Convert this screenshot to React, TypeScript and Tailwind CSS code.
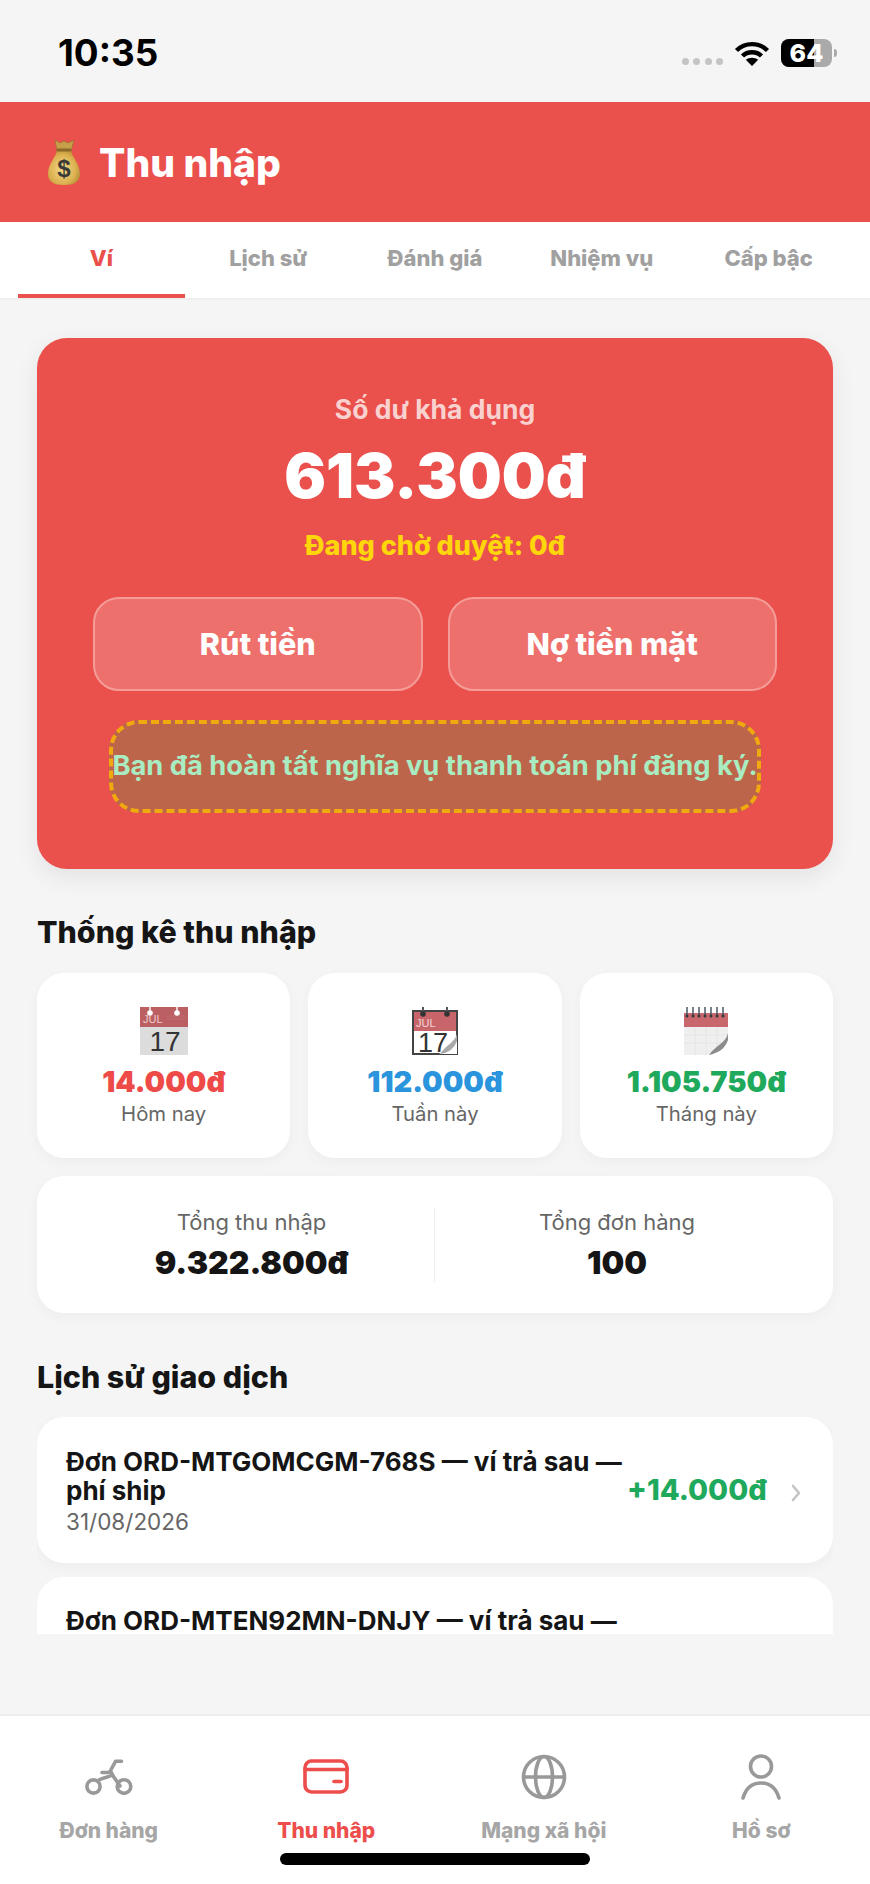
import React from "react";

function MoneyBag() {
  return (
    <svg width="34" height="48" viewBox="0 0 34 48" className="shrink-0">
      <defs>
        <radialGradient id="bag" cx="45%" cy="55%" r="65%">
          <stop offset="0%" stopColor="#f4d98a" />
          <stop offset="65%" stopColor="#dcb04e" />
          <stop offset="100%" stopColor="#a9812e" />
        </radialGradient>
      </defs>
      <path d="M8 2 L13 5 L17 3 L21 5 L27 2 L24 13 L10 13 Z" fill="#c79f4b" stroke="#8f6f2c" strokeWidth="0.6" />
      <path d="M10 12 C10 18 1 25 1 36 C1 44 7 47 17 47 C27 47 33 44 33 36 C33 25 24 18 24 12 Z" fill="url(#bag)" />
      <rect x="9.5" y="10.5" width="15" height="3" rx="1.5" fill="#8a6a26" />
      <text x="17" y="39" textAnchor="middle" fontFamily="Liberation Sans, sans-serif" fontWeight="700" fontSize="24" fill="#3a3a36">$</text>
    </svg>
  );
}

function CalendarOne() {
  return (
    <svg width="48" height="52" viewBox="0 0 48 52">
      <rect x="0" y="19" width="48" height="29" fill="#dcdcdc" />
      <rect x="0" y="0" width="48" height="20" fill="#bb5f62" />
      <path d="M27 9h19M27 12h19" stroke="#cc8b8d" strokeWidth="0.6" strokeDasharray="1 1" />
      <circle cx="10" cy="6" r="2.8" fill="#fff" />
      <circle cx="37" cy="6" r="2.8" fill="#fff" />
      <path d="M10 0v5M37 0v5" stroke="#fff" strokeWidth="1.4" />
      <text x="3" y="16" fontFamily="Liberation Sans, sans-serif" fontSize="11" fill="#eeccce">JUL</text>
      <text x="25" y="44" textAnchor="middle" fontFamily="Liberation Sans, sans-serif" fontSize="28" fill="#333">17</text>
    </svg>
  );
}

function CalendarTwo() {
  return (
    <svg width="46" height="52" viewBox="0 0 46 52">
      <path d="M1 4 H45 V47 H1 Z" fill="#fff" stroke="#444" strokeWidth="2" />
      <rect x="2" y="5" width="42" height="19" fill="#c8656a" />
      <path d="M11 0v7M35 0v7" stroke="#555" strokeWidth="2" />
      <circle cx="11" cy="7" r="2.8" fill="#333" />
      <circle cx="35" cy="7" r="2.8" fill="#333" />
      <text x="4" y="20" fontFamily="Liberation Sans, sans-serif" fontSize="11" fill="#f3d5d6">JUL</text>
      <text x="21" y="45" textAnchor="middle" fontFamily="Liberation Sans, sans-serif" fontSize="27" fill="#333">17</text>
      <path d="M45 29 C41 38 36 42 27 47 H45 Z" fill="#fff" />
      <path d="M45 27 C43 35 34 38 28 47 C36 46 42 42 45 34 Z" fill="#a9a9a9" />
    </svg>
  );
}

function CalendarThree() {
  const xs = [3, 9, 15, 21, 27, 33, 39];
  return (
    <svg width="44" height="52" viewBox="0 0 44 52">
      <rect x="0" y="6" width="44" height="42" fill="#f0eff0" />
      <path d="M0 28h44M0 36h44M11 20v28M22 20v28M33 20v28" stroke="#e2e2e2" strokeWidth="0.7" />
      <rect x="0" y="6" width="44" height="14" fill="#c8676c" />
      {xs.map((x) => (
        <g key={x}>
          <path d={`M${x} 0v9`} stroke="#4a5a60" strokeWidth="1.5" />
          <circle cx={x} cy={9} r="1.5" fill="#2f3a3e" />
        </g>
      ))}
      <path d="M44 28 C40 38 34 42 24 48 H44 Z" fill="#fff" />
      <path d="M44 26 C42 36 32 38 25 48 C34 46 41 42 44 33 Z" fill="#8c8c8c" />
    </svg>
  );
}

function ScooterIcon() {
  return (
    <svg width="48" height="36" viewBox="0 0 48 36" fill="none" stroke="#999" strokeWidth="3.6" strokeLinecap="round" strokeLinejoin="round">
      <circle cx="8.5" cy="27.5" r="6.6" />
      <circle cx="39" cy="27.5" r="6.8" />
      <path d="M36.5 2.3 H30.5 L25 12.5 L35 27" />
      <path d="M17 13.5 H26.5" />
      <path d="M14 21 C18 18.5 24 18 27.5 16" />
    </svg>
  );
}

function WalletIcon() {
  return (
    <svg width="46" height="36" viewBox="0 0 46 36" fill="none" stroke="#ed4d4b" strokeWidth="3.6" strokeLinecap="round">
      <rect x="2" y="2" width="42" height="31" rx="6.5" />
      <path d="M2 10.5 H44" />
      <path d="M31 22.5 H38" strokeWidth="3.6" />
    </svg>
  );
}

function GlobeIcon() {
  return (
    <svg width="46" height="46" viewBox="0 0 46 46" fill="none" stroke="#999" strokeWidth="3.6">
      <circle cx="23" cy="23" r="20.5" />
      <ellipse cx="23" cy="23" rx="8.5" ry="20.5" />
      <path d="M3 23 H43" />
    </svg>
  );
}

function PersonIcon() {
  return (
    <svg width="42" height="46" viewBox="0 0 42 46" fill="none" stroke="#999" strokeWidth="3.6" strokeLinecap="round">
      <circle cx="21" cy="12.5" r="10.5" />
      <path d="M3 44 C6 34 12 29 21 29 C30 29 36 34 39 44" />
    </svg>
  );
}

function Chevron() {
  return (
    <svg width="10" height="18" viewBox="0 0 10 18" fill="none" stroke="#c4c4c4" strokeWidth="2.6" strokeLinecap="round" strokeLinejoin="round">
      <path d="M2 2 L8 9 L2 16" />
    </svg>
  );
}

const tabs = ["Ví", "Lịch sử", "Đánh giá", "Nhiệm vụ", "Cấp bậc"];

const stats = [
  { icon: <CalendarOne />, value: "14.000đ", label: "Hôm nay", color: "text-[#ed4a48]" },
  { icon: <CalendarTwo />, value: "112.000đ", label: "Tuần này", color: "text-[#2a94dc]" },
  { icon: <CalendarThree />, value: "1.105.750đ", label: "Tháng này", color: "text-[#1fa95c]" },
];

const nav = [
  { icon: <ScooterIcon />, label: "Đơn hàng", active: false },
  { icon: <WalletIcon />, label: "Thu nhập", active: true },
  { icon: <GlobeIcon />, label: "Mạng xã hội", active: false },
  { icon: <PersonIcon />, label: "Hồ sơ", active: false },
];

export default function App() {
  return (
    <div className="relative flex h-[1884px] w-[870px] flex-col overflow-hidden bg-[#f5f5f5] font-['Inter','Noto_Sans',sans-serif]">
      {/* Status bar */}
      <div className="flex h-[102px] shrink-0 items-start justify-between pl-[58px] pr-[33px]">
        <div className="mt-[32px] text-[36.8px] font-bold leading-[42px] text-black">10:35</div>
        <div className="mt-[39px] flex items-start">
          <div className="mt-[19px] flex gap-[4.5px]">
            {[0, 1, 2, 3].map((i) => (
              <div key={i} className="h-[7px] w-[7px] rounded-full bg-[#c4c4c4]" />
            ))}
          </div>
          <svg width="36" height="27" viewBox="0 0 36 27" className="ml-[11px] mt-[1px]" fill="none" stroke="#000" strokeWidth="4.4">
            <path d="M2.5 10.5 C11 2 25 2 33.5 10.5" />
            <path d="M8.5 16 C13.5 11 22.5 11 27.5 16" />
            <path d="M18 26 L11.8 19.8 C15 17 21 17 24.2 19.8 Z" fill="#000" stroke="none" />
          </svg>
          <div className="relative ml-[11px] flex h-[28px] w-[51px] rounded-[8px] bg-[#aaaaaa]">
            <div className="h-full w-[33px] rounded-l-[8px] bg-black" />
            <div className="absolute inset-0 flex items-center justify-center text-[25px] font-extrabold leading-none text-white">64</div>
          </div>
          <div className="ml-[2px] mt-[10px] h-[8px] w-[3px] rounded-r-full bg-[#aaaaaa]" />
        </div>
      </div>

      {/* Header */}
      <div className="flex h-[120px] shrink-0 items-center gap-[18px] bg-[#ea504c] pl-[47px]">
        <MoneyBag />
        <div className="pt-[1px] text-[39px] font-extrabold leading-[44px] text-white">Thu nhập</div>
      </div>

      {/* Tabs */}
      <div className="grid h-[78px] shrink-0 grid-cols-5 border-b-2 border-[#eeeeee] bg-white px-[18px]">
        {tabs.map((t, i) => (
          <div
            key={t}
            className={
              i === 0
                ? "flex items-center justify-center border-b-4 border-[#ea504c] text-[22px] font-extrabold text-[#ea504c]"
                : "flex items-center justify-center border-b-4 border-transparent text-[22px] font-extrabold text-[#a0a0a0]"
            }
          >
            {t}
          </div>
        ))}
      </div>

      {/* Content */}
      <div className="min-h-0 flex-1 overflow-hidden px-[37px] pt-[38px]">
        {/* Balance card */}
        <div className="flex flex-col items-center rounded-[30px] bg-[#ea504c] px-[56px] pb-[56px] pt-[56px] shadow-[0_8px_24px_rgba(0,0,0,0.08)]">
          <div className="text-[26.5px] font-bold leading-[30px] text-[#f9d2d0]">Số dư khả dụng</div>
          <div className="mt-[17px] text-[62px] font-black leading-[70px] text-white">613.300đ</div>
          <div className="mt-[20px] text-[27px] font-extrabold leading-[30px] text-[#ffd60a]">Đang chờ duyệt: 0đ</div>
          <div className="mt-[36px] flex w-full gap-[25px]">
            {["Rút tiền", "Nợ tiền mặt"].map((b) => (
              <div
                key={b}
                className="flex h-[94px] flex-1 items-center justify-center rounded-[26px] border-2 border-[#f59c98] bg-[#ee706c] text-[30.5px] font-extrabold text-white"
              >
                {b}
              </div>
            ))}
          </div>
          <div className="mt-[29px] flex h-[93px] w-[652px] items-center justify-center whitespace-nowrap rounded-[30px] border-4 border-dashed border-[#f0a90f] bg-[#bd654a] text-[27.3px] font-bold text-[#a9ecc2]">
            Bạn đã hoàn tất nghĩa vụ thanh toán phí đăng ký.
          </div>
        </div>

        {/* Stats */}
        <div className="mt-[45px] text-[30.4px] font-extrabold leading-[36px] text-[#151515]">Thống kê thu nhập</div>
        <div className="mt-[23px] grid grid-cols-3 gap-[18px]">
          {stats.map((s) => (
            <div
              key={s.label}
              className="flex h-[185px] flex-col items-center rounded-[27px] bg-white pt-[34px] shadow-[0_4px_14px_rgba(0,0,0,0.035)]"
            >
              <div className="flex h-[48px] items-start justify-center">{s.icon}</div>
              <div className={`mt-[10px] text-[29px] font-black leading-[34px] ${s.color}`}>{s.value}</div>
              <div className="mt-[2px] text-[20.3px] leading-[26px] text-[#666666]">{s.label}</div>
            </div>
          ))}
        </div>

        {/* Totals */}
        <div className="mt-[18px] grid h-[137px] grid-cols-2 rounded-[27px] bg-white px-[34px] py-[32px] shadow-[0_4px_14px_rgba(0,0,0,0.035)]">
          <div className="flex flex-col items-center border-r border-[#eeeeee] pr-[2px]">
            <div className="text-[22px] leading-[28px] text-[#666666]">Tổng thu nhập</div>
            <div className="mt-[8px] text-[32px] font-black leading-[38px] text-[#151515]">9.322.800đ</div>
          </div>
          <div className="flex flex-col items-center">
            <div className="text-[22px] leading-[28px] text-[#666666]">Tổng đơn hàng</div>
            <div className="mt-[8px] text-[32px] font-black leading-[38px] text-[#151515]">100</div>
          </div>
        </div>

        {/* History */}
        <div className="mt-[46px] text-[30.4px] font-extrabold leading-[36px] text-[#151515]">Lịch sử giao dịch</div>
        <div className="mt-[22px] flex h-[217px] flex-col gap-[14px] overflow-hidden">
          <div className="flex h-[146px] shrink-0 items-center rounded-[27px] bg-white pl-[29px] shadow-[0_4px_14px_rgba(0,0,0,0.035)]">
            <div className="w-[561px] shrink-0 pt-[2px]">
              <div className="text-[26px] font-bold leading-[29px] text-[#151515]">
                Đơn ORD-MTGOMCGM-768S — ví trả sau — phí ship
              </div>
              <div className="mt-[4px] text-[22.5px] leading-[26px] text-[#666666]">31/08/2026</div>
            </div>
            <div className="text-[29px] font-extrabold leading-[34px] text-[#1fa95c]">+14.000đ</div>
            <div className="ml-[24px] mt-[6px] flex">
              <Chevron />
            </div>
          </div>
          <div className="h-[146px] shrink-0 rounded-[27px] bg-white pl-[29px] pt-[29px]">
            <div className="w-[561px] text-[26px] font-bold leading-[29px] text-[#151515]">
              Đơn ORD-MTEN92MN-DNJY — ví trả sau —
            </div>
          </div>
        </div>
      </div>

      {/* Bottom nav */}
      <div className="relative grid h-[170px] shrink-0 grid-cols-4 border-t-2 border-[#eeeeee] bg-white pt-[38px]">
        {nav.map((n) => (
          <div key={n.label} className="flex flex-col items-center">
            <div className="flex h-[46px] items-center justify-center">{n.icon}</div>
            <div
              className={
                n.active
                  ? "mt-[18px] text-[21px] font-extrabold leading-[26px] text-[#ed4d4b]"
                  : "mt-[18px] text-[21px] font-extrabold leading-[26px] text-[#a6a6a6]"
              }
            >
              {n.label}
            </div>
          </div>
        ))}
        <div className="absolute bottom-[19px] left-[280px] h-[12px] w-[310px] rounded-full bg-black" />
      </div>
    </div>
  );
}
